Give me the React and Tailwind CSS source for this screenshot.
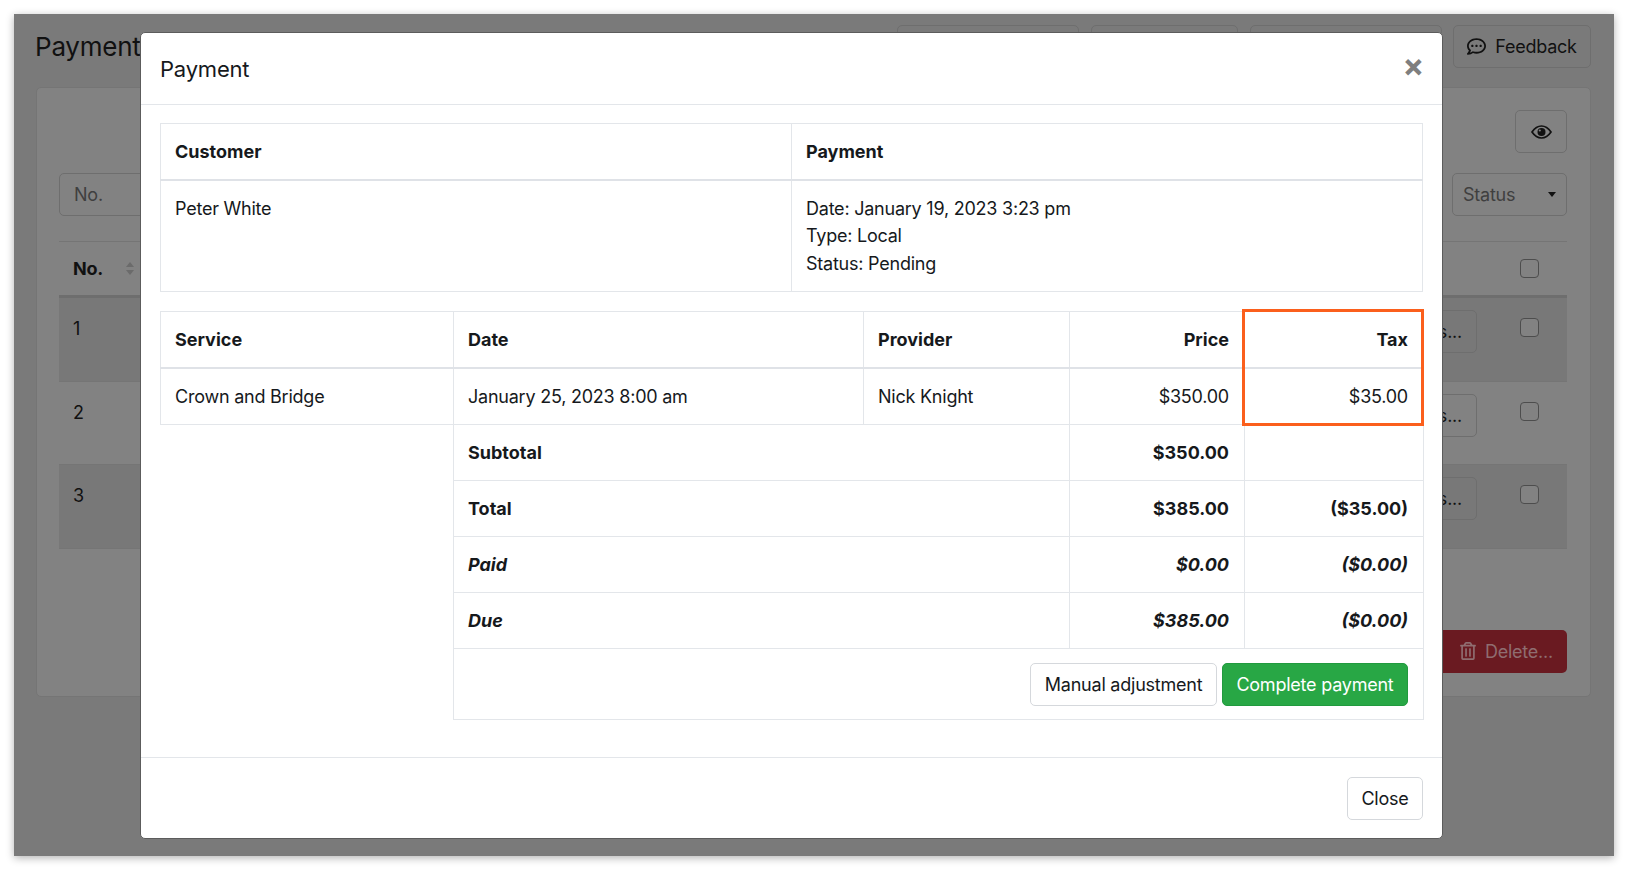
import { FaRegCommentDots, FaRegTrashAlt } from 'react-icons/fa';

const Checkbox = () => (
  <span className="block w-[19px] h-[19px] rounded-[4px] border border-[#4d4d4d] bg-[#828282]" />
);

const EyeIcon = () => (
  <svg width="21" height="14" viewBox="0 0 21 14" fill="none">
    <path
      d="M1 7C4 2.6 7 1 10.5 1C14 1 17 2.6 20 7C17 11.4 14 13 10.5 13C7 13 4 11.4 1 7Z"
      stroke="#111"
      strokeWidth="1.7"
    />
    <circle cx="10.5" cy="7" r="4" fill="#111" />
    <circle cx="8.8" cy="5.5" r="1.1" fill="#828282" />
  </svg>
);

const bgRows = [
  { no: '1', striped: true },
  { no: '2', striped: false },
  { no: '3', striped: true },
];

const BackgroundPage = () => (
  <div className="h-full pl-[22px] pr-[23px] pt-[11px] text-[#111]">
    <div className="flex justify-between h-[43px] mb-[19px]">
      <h1 className="text-[26px] leading-[43px] font-normal -ml-[1px]">Payments</h1>
      <div className="flex">
        <button className="w-[182px] mr-[12px] rounded-[5px] border border-[#6e6e6e]" />
        <button className="w-[147px] mr-[12px] rounded-[5px] border border-[#6e6e6e]" />
        <button className="w-[192px] mr-[11px] rounded-[5px] border border-[#6e6e6e]" />
        <button className="w-[138px] flex items-center justify-center gap-[9px] rounded-[5px] border border-[#6e6e6e] text-[#111]">
          <FaRegCommentDots className="text-[19px]" />
          Feedback
        </button>
      </div>
    </div>
    <div className="h-[610px] rounded-[5px] border border-[#757575] bg-[#828282] pl-[22px] pr-[23px] pt-[22px]">
      <div className="flex justify-end">
        <button className="w-[52px] h-[43px] flex items-center justify-center rounded-[5px] border border-[#6e6e6e]">
          <EyeIcon />
        </button>
      </div>
      <div className="flex justify-between mt-[20px] h-[43px] text-[#3f3f3f]">
        <div className="w-[200px] flex items-center rounded-[5px] border border-[#6e6e6e] px-[14px]">No.</div>
        <div className="w-[115px] flex items-center justify-between rounded-[5px] border border-[#6e6e6e] pl-[10px] pr-[10px]">
          Status
          <span className="w-0 h-0 border-x-[4px] border-x-transparent border-t-[5px] border-t-[#111]" />
        </div>
      </div>
      <div className="mt-[25px] h-[57px] flex items-center justify-between border-t border-b-[3px] border-t-[#757575] border-b-[#6e6e6e] pl-[14px] pr-[28px]">
        <div className="flex items-center gap-[23px] font-bold">
          No.
          <span className="flex flex-col gap-[3px]">
            <span className="w-0 h-0 border-x-[4px] border-x-transparent border-b-[5px] border-b-[#6b6b6b]" />
            <span className="w-0 h-0 border-x-[4px] border-x-transparent border-t-[5px] border-t-[#6b6b6b]" />
          </span>
        </div>
        <Checkbox />
      </div>
      {bgRows.map((row) => (
        <div
          key={row.no}
          className={`h-[83.5px] flex justify-between border-b border-[#757575] pl-[14px] pr-[28px] pt-[12px] ${row.striped ? 'bg-[#787878]' : ''}`}
        >
          <span className="leading-[28px] mt-[5px]">{row.no}</span>
          <div className="flex gap-[43px]">
            <button className="w-[60px] h-[43px] rounded-[5px] border border-[#6e6e6e] text-right pr-[14px] text-[#111]">s...</button>
            <div className="pt-[8px]"><Checkbox /></div>
          </div>
        </div>
      ))}
      <div className="flex justify-end mt-[81px]">
        <button className="w-[140px] h-[43px] flex items-center justify-end gap-[8px] pr-[14px] rounded-[5px] bg-[#6a1a21] text-[#8f6d70]">
          <FaRegTrashAlt className="text-[18px]" />
          Delete...
        </button>
      </div>
    </div>
  </div>
);

const cell = 'border border-[#e3e6ea] pl-[14px] pr-[15px] align-middle';
const headCell = 'border border-[#e3e6ea] border-b-2 border-b-[#dfe2e7] pl-[14px] pr-[15px] align-middle font-bold tracking-normal';

const summaryRows = [
  { label: 'Subtotal', price: '$350.00', tax: '', italic: false },
  { label: 'Total', price: '$385.00', tax: '($35.00)', italic: false },
  { label: 'Paid', price: '$0.00', tax: '($0.00)', italic: true },
  { label: 'Due', price: '$385.00', tax: '($0.00)', italic: true },
];

const PaymentModal = () => (
  <div className="absolute left-[126px] top-[18px] w-[1303px] h-[807px] flex flex-col rounded-[5px] border border-[#5c5c5c] bg-white text-[#16191c]">
    <div className="h-[72px] flex items-center justify-between border-b border-[#e3e6ea] px-[19px] pt-[1px]">
      <h2 className="text-[22px] font-normal tracking-[-0.2px]">Payment</h2>
      <button className="text-[32px] leading-none font-bold text-[#7f7f7f] -mt-[7px] -mr-[1px]">×</button>
    </div>

    <div className="flex-1 px-[19px] pt-[18px]">
      <table className="w-[1263px] table-fixed border-collapse mb-[19px]">
        <thead>
          <tr className="h-[56px]">
            <th className={`${headCell} text-left`}>Customer</th>
            <th className={`${headCell} text-left`}>Payment</th>
          </tr>
        </thead>
        <tbody>
          <tr className="h-[112px] leading-[27.7px]">
            <td className={`${cell} align-top pt-[14px]`}>Peter White</td>
            <td className={`${cell} align-top pt-[14px]`}>
              <div>Date: January 19, 2023 3:23 pm</div>
              <div>Type: Local</div>
              <div>Status: Pending</div>
            </td>
          </tr>
        </tbody>
      </table>

      <div className="relative">
        <table className="w-[1263px] table-fixed border-collapse">
          <colgroup>
            <col className="w-[293px]" />
            <col className="w-[410px]" />
            <col className="w-[206px]" />
            <col className="w-[175px]" />
            <col className="w-[179px]" />
          </colgroup>
          <thead>
            <tr className="h-[56px]">
              <th className={`${headCell} text-left`}>Service</th>
              <th className={`${headCell} text-left`}>Date</th>
              <th className={`${headCell} text-left`}>Provider</th>
              <th className={`${headCell} text-right`}>Price</th>
              <th className={`${headCell} text-right`}>Tax</th>
            </tr>
          </thead>
          <tbody>
            <tr className="h-[57px]">
              <td className={cell}>Crown and Bridge</td>
              <td className={cell}>January 25, 2023 8:00 am</td>
              <td className={cell}>Nick Knight</td>
              <td className={`${cell} text-right`}>$350.00</td>
              <td className={`${cell} text-right`}>$35.00</td>
            </tr>
            {summaryRows.map((row, i) => (
              <tr key={row.label} className={`h-[56px] font-bold tracking-normal ${row.italic ? 'italic' : ''}`}>
                {i === 0 && <td rowSpan={5} />}
                <td colSpan={2} className={cell}>{row.label}</td>
                <td className={`${cell} text-right`}>{row.price}</td>
                <td className={`${cell} text-right`}>{row.tax}</td>
              </tr>
            ))}
            <tr className="h-[71px]">
              <td colSpan={4} className={cell}>
                <div className="flex justify-end gap-[5px] tracking-[-0.23px]">
                  <button className="h-[43px] px-[13.5px] rounded-[5px] border border-[#d5d8dc] bg-white">Manual adjustment</button>
                  <button className="h-[43px] px-[13.5px] rounded-[5px] border border-[#219a3e] bg-[#28a745] text-white">Complete payment</button>
                </div>
              </td>
            </tr>
          </tbody>
        </table>
        <div className="absolute left-[1082px] -top-[2px] w-[182px] h-[117px] border-[3px] border-[#fb5f1c] pointer-events-none" />
      </div>
    </div>

    <div className="h-[81px] flex items-center justify-end border-t border-[#e3e6ea] pr-[19px]">
      <button className="h-[43px] w-[76px] rounded-[5px] border border-[#d5d8dc] bg-white">Close</button>
    </div>
  </div>
);

export default function App() {
  return (
    <div className="w-[1628px] h-[870px] bg-white p-[14px] text-[18px] tracking-[-0.23px] font-['Inter','Liberation_Sans',sans-serif]">
      <div className="relative h-[842px] bg-[#7a7a7a] shadow-[0_2px_8px_rgba(0,0,0,0.3)] overflow-hidden">
        <BackgroundPage />
        <PaymentModal />
      </div>
    </div>
  );
}
